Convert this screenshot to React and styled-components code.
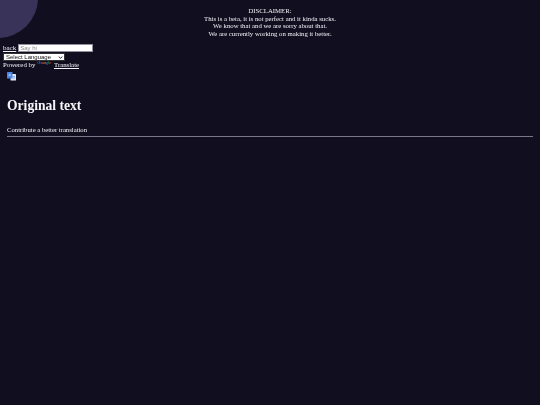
import React from "react";
import styled, { createGlobalStyle } from "styled-components";

const GlobalStyle = createGlobalStyle`
  html, body {
    margin: 0;
    height: 100%;
    background: #100e1f;
  }
  body {
    font-family: "Liberation Serif", "Times New Roman", serif;
    color: #f4f2f8;
    overflow: hidden;
  }
`;

// the reference is a downscaled shot, so everything is slightly soft
const Page = styled.div`
  position: relative;
  height: 405px;
  overflow: hidden;
  filter: blur(0.25px);
`;

// decorative blob in the corner
const Blob = styled.div`
  position: absolute;
  left: -42px;
  top: -42px;
  width: 80px;
  height: 80px;
  border-radius: 50%;
  background: #39335a;
`;

const Disclaimer = styled.div`
  padding-top: 7px;
  margin-bottom: 7px;
  text-align: center;
  font-size: 6.75px;
  line-height: 7.5px;
`;

const TranslateBox = styled.div`
  padding-left: 3px;
  font-size: 6.8px;
`;

const SearchRow = styled.div`
  display: flex;
  align-items: center;
  height: 8px;
`;

const BackLink = styled.a`
  color: #f4f2f8;
  text-decoration: underline;
  font-size: 7px;
  margin-right: 2px;
`;

const SayInput = styled.input`
  box-sizing: border-box;
  width: 75px;
  height: 8px;
  padding: 0 1px;
  border: 1px solid #8f8f9d;
  background: #fff;
  font-family: "Liberation Sans", Arial, sans-serif;
  font-size: 6px;
  outline: none;

  &::placeholder {
    color: #8a8a8a;
  }
`;

const LangSelect = styled.select`
  display: block;
  box-sizing: border-box;
  appearance: none;
  width: 62px;
  height: 8px;
  margin-top: 1px;
  padding: 0 0 0 2px;
  border: 1px solid #333;
  border-radius: 1px;
  background-color: #fff;
  background-image: url("data:image/svg+xml,%3Csvg xmlns='http://www.w3.org/2000/svg' viewBox='0 0 6 4'%3E%3Cpath d='M.8 .8 3 3l2.2-2.2' fill='none' stroke='%23111' stroke-width='1.1'/%3E%3C/svg%3E");
  background-repeat: no-repeat;
  background-position: right 2px center;
  background-size: 4.5px 3px;
  color: #111;
  font-family: "Liberation Sans", Arial, sans-serif;
  font-size: 6px;
  line-height: 6px;
`;

const PoweredRow = styled.div`
  display: flex;
  align-items: center;
  height: 8px;
  margin-top: -1px;
  white-space: nowrap;
`;

const GoogleWord = styled.span`
  font-family: "Liberation Sans", Arial, sans-serif;
  font-size: 4.4px;
  margin: -3px 2.5px 0 2px;
`;

const Letter = styled.span`
  color: ${(p) => p.$c};
`;

const TranslateLink = styled.a`
  color: #f4f2f8;
  text-decoration: underline;
`;

const IconWrap = styled.div`
  padding: 4px 0 0 4px;
  height: 9px;
`;

const Content = styled.main`
  padding: 15px 7px 0;
`;

const Title = styled.h1`
  margin: 0;
  font-size: 13.6px;
  line-height: 19px;
  font-weight: bold;
  color: #f6f5f9;
`;

const Contribute = styled.p`
  margin: 10px 0 0;
  font-size: 6.7px;
  line-height: 9px;
`;

const Rule = styled.hr`
  margin: 2px 0 0;
  border: 0;
  height: 1px;
  background: #7a7887;
`;

const googleLetters = [
  ["G", "#4285f4"],
  ["o", "#ea4335"],
  ["o", "#fbbc05"],
  ["g", "#4285f4"],
  ["l", "#34a853"],
  ["e", "#ea4335"],
];

const TranslateIcon = () => (
  <svg width="9" height="9" viewBox="0 0 9 9">
    <rect x="3.5" y="2" width="5.5" height="6.5" rx="0.5" fill="#dfe9fb" />
    <rect x="0" y="0" width="5.5" height="6.5" rx="0.5" fill="#4a86e8" />
    <path d="M1.5 3.2h2.5M2.7 1.8v1" stroke="#fff" strokeWidth="0.6" fill="none" />
    <path d="M5.5 4.5h2.5M6.5 7l1-2" stroke="#4a86e8" strokeWidth="0.6" fill="none" />
  </svg>
);

export default function App() {
  return (
    <Page>
      <GlobalStyle />
      <Blob />
      <Disclaimer>
        <div>DISCLAIMER:</div>
        <div>This is a beta, it is not perfect and it kinda sucks.</div>
        <div>We know that and we are sorry about that.</div>
        <div>We are currently working on making it better.</div>
      </Disclaimer>
      <TranslateBox>
        <SearchRow>
          <BackLink href="#">back</BackLink>
          <SayInput placeholder="Say hi" />
        </SearchRow>
        <LangSelect defaultValue="">
          <option value="">Select Language</option>
        </LangSelect>
        <PoweredRow>
          Powered by
          <GoogleWord>
            {googleLetters.map(([ch, c], i) => (
              <Letter key={i} $c={c}>{ch}</Letter>
            ))}
          </GoogleWord>
          <TranslateLink href="#">Translate</TranslateLink>
        </PoweredRow>
        <IconWrap>
          <TranslateIcon />
        </IconWrap>
      </TranslateBox>
      <Content>
        <Title>Original text</Title>
        <Contribute>Contribute a better translation</Contribute>
        <Rule />
      </Content>
    </Page>
  );
}
